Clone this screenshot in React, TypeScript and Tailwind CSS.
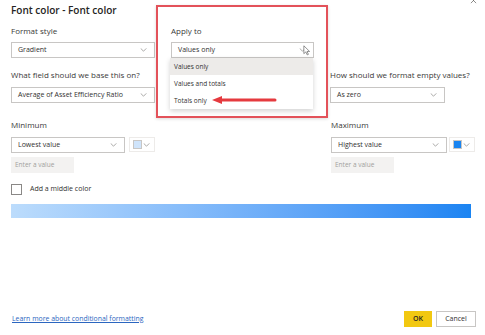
import React from "react";

function Chevron({ className = "" }: { className?: string }) {
  return (
    <svg viewBox="0 0 8 5" className={`h-[4px] w-[7px] ${className}`} fill="none">
      <path d="M0.5 0.5 L4 4 L7.5 0.5" stroke="#8a8886" strokeWidth="0.9" />
    </svg>
  );
}

function Select({ value, className = "" }: { value: string; className?: string }) {
  return (
    <div
      className={`flex h-[16px] items-center justify-between border border-[#c8c6c4] bg-white pl-[6px] pr-[7px] text-[7px] text-[#323130] ${className}`}
    >
      <span className="whitespace-nowrap">{value}</span>
      <Chevron />
    </div>
  );
}

function Swatch({ color }: { color: string }) {
  return (
    <div className="flex h-[15px] w-[26px] items-center justify-between border border-[#edebe9] pl-[3px] pr-[4px]">
      <span className={`h-[9px] w-[9px] border border-[#c8c6c4] ${color}`} />
      <Chevron />
    </div>
  );
}

function Label({ children, className = "" }: { children: React.ReactNode; className?: string }) {
  return (
    <div className={`h-[12px] whitespace-nowrap text-[8px] leading-[12px] text-[#3b3a39] ${className}`}>{children}</div>
  );
}

export default function App() {
  return (
    <div className="relative flex h-[335px] w-[485px] flex-col overflow-hidden bg-white font-['Open_Sans',sans-serif]">
      <div className="pl-[11px] pt-[3px]">
        <h1 className="h-[15px] text-[10px] font-semibold leading-[15px] text-[#252423]">Font color - Font color</h1>

        <div className="mt-[7px] grid grid-cols-[144px_143px_145px] gap-x-[16px]">
          <div>
            <Label>Format style</Label>
            <Select value="Gradient" className="mt-[5px]" />
          </div>
          <div>
            <Label>Apply to</Label>
            <Select value="Values only" className="mt-[5px]" />
          </div>
          <div />

          <div className="mt-[11px]">
            <Label>What field should we base this on?</Label>
            <Select value="Average of Asset Efficiency Ratio" className="mt-[6px]" />
          </div>
          <div />
          <div className="mt-[11px]">
            <Label>How should we format empty values?</Label>
            <Select value="As zero" className="mt-[6px] w-[115px]" />
          </div>

          <div className="mt-[16px]">
            <Label>Minimum</Label>
            <div className="mt-[6px] flex gap-[4px]">
              <Select value="Lowest value" className="h-[15px] w-[117px]" />
              <Swatch color="bg-[#cfe4fb]" />
            </div>
            <div className="mt-[4px] flex h-[16px] w-[63px] items-center bg-[#f3f2f1] pl-[4px] text-[6.5px] text-[#a19f9d]">
              Enter a value
            </div>
          </div>
          <div />
          <div className="mt-[16px] pl-[1px]">
            <Label>Maximum</Label>
            <div className="mt-[6px] flex gap-[2px]">
              <Select value="Highest value" className="h-[15px] w-[116px]" />
              <Swatch color="bg-[#1a85f1] border-[#1a85f1]" />
            </div>
            <div className="mt-[4px] flex h-[16px] w-[63px] items-center bg-[#f3f2f1] pl-[4px] text-[6.5px] text-[#a19f9d]">
              Enter a value
            </div>
          </div>
        </div>

        <div className="mt-[11px] flex items-center gap-[8px]">
          <span className="h-[11px] w-[11px] border border-[#8a8886] bg-white" />
          <span className="text-[7px] text-[#323130]">Add a middle color</span>
        </div>

        <div className="mt-[9px] h-[14px] w-[460px] bg-gradient-to-r from-[#bcdcfc] to-[#1a84f2]" />
      </div>

      <div className="mt-auto flex items-center justify-between pb-[8px] pl-[12px] pr-[9px]">
        <a className="text-[6.9px] text-[#2b66c0] underline">Learn more about conditional formatting</a>
        <div className="flex gap-[4px]">
          <button className="h-[16px] w-[28px] bg-[#f2c811] text-[7px] font-semibold text-[#252423]">OK</button>
          <button className="h-[16px] w-[40px] border border-[#c8c6c4] bg-white text-[7px] text-[#323130]">Cancel</button>
        </div>
      </div>

      {/* close icon, cut off at top */}
      <svg viewBox="0 0 8 8" className="absolute right-[8px] top-[-3px] h-[7px] w-[7px]" fill="none">
        <path d="M1 1 L7 7 M7 1 L1 7" stroke="#605e5c" strokeWidth="0.8" />
      </svg>

      {/* highlight annotation */}
      <div className="absolute left-[156px] top-[5px] h-[113px] w-[172px] border-2 border-[#e3525a] shadow-[0_1px_3px_rgba(0,0,0,0.15)]" />

      {/* open dropdown menu */}
      <div className="absolute left-[170px] top-[58px] w-[143px] bg-white text-[6.5px] text-[#323130] shadow-[0_2px_5px_rgba(0,0,0,0.18)]">
        <div className="flex h-[17px] items-center bg-[#edebe9] pl-[4px]">Values only</div>
        <div className="flex h-[17px] items-center pl-[4px]">Values and totals</div>
        <div className="flex h-[17px] items-center pl-[4px]">Totals only</div>
      </div>

      {/* red arrow */}
      <svg viewBox="0 0 66 10" className="absolute left-[211px] top-[95px] h-[10px] w-[66px]">
        <path d="M64 5 L10 5" stroke="#e53a3f" strokeWidth="3" strokeLinecap="round" />
        <path d="M1 5 L11 1 L11 9 Z" fill="#e53a3f" />
      </svg>

      {/* mouse pointer */}
      <svg viewBox="0 0 10 14" className="absolute left-[303px] top-[45px] h-[11px] w-[8px]" fill="white">
        <path d="M1 1 L1 11 L3.5 8.8 L5.3 12.6 L6.8 11.9 L5 8.2 L8.3 8.2 Z" stroke="#555" strokeWidth="0.8" strokeLinejoin="round" />
      </svg>
    </div>
  );
}
